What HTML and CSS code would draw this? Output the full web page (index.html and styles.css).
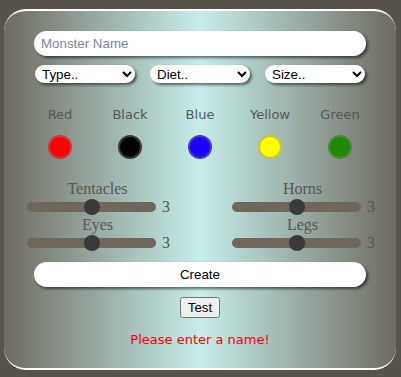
FILE: index.html
```html
<!DOCTYPE html>
<html>

<head>
  <meta charset="utf-8">
  <meta name="viewport" content="width=device-width">
  <title>Monster Maker</title>

  <link rel="stylesheet" href="styles.css">
</head>

<body>
  <div class="card">

    <input class="name" type="text" placeholder="Monster Name">

    <div class="selects">
      <select class="select">
        <option>Type..</option>
      </select>
      <select class="select">
        <option>Diet..</option>
      </select>
      <select class="select">
        <option>Size..</option>
      </select>
    </div>

    <div class="colors">
      <div class="color">
        <span class="color__name">Red</span>
        <span class="color__dot color__dot--red"></span>
      </div>
      <div class="color">
        <span class="color__name">Black</span>
        <span class="color__dot color__dot--black"></span>
      </div>
      <div class="color">
        <span class="color__name">Blue</span>
        <span class="color__dot color__dot--blue"></span>
      </div>
      <div class="color">
        <span class="color__name">Yellow</span>
        <span class="color__dot color__dot--yellow"></span>
      </div>
      <div class="color">
        <span class="color__name">Green</span>
        <span class="color__dot color__dot--green"></span>
      </div>
    </div>

    <div class="sliders">
      <div class="slider">
        <span class="slider__label">Tentacles</span>
        <div class="slider__row">
          <input class="range" type="range" min="1" max="5" value="3">
          <span class="slider__value">3</span>
        </div>
      </div>
      <div class="slider">
        <span class="slider__label">Horns</span>
        <div class="slider__row">
          <input class="range" type="range" min="1" max="5" value="3">
          <span class="slider__value">3</span>
        </div>
      </div>
      <div class="slider">
        <span class="slider__label">Eyes</span>
        <div class="slider__row">
          <input class="range" type="range" min="1" max="5" value="3">
          <span class="slider__value">3</span>
        </div>
      </div>
      <div class="slider">
        <span class="slider__label">Legs</span>
        <div class="slider__row">
          <input class="range" type="range" min="1" max="5" value="3">
          <span class="slider__value">3</span>
        </div>
      </div>
    </div>

    <button class="create" type="button">Create</button>

    <button class="test" type="button">Test</button>

    <p class="message">Please enter a name!</p>

  </div>
</body>

</html>
```

FILE: styles.css
```css
:root {
  --color-page: #57534b;
  --color-edge: #6f6b61;
  --color-glow: #c6eeea;
  --color-label: #575757;
  --shadow-pill: 2px 2px 3px rgba(0, 0, 0, 0.55);
}

body {
  margin: 0;
  padding: 9px 5px 0 4px;
  background-color: var(--color-page);
  font-family: 'Liberation Sans', Arial, sans-serif;
}

.card {
  display: flex;
  flex-direction: column;
  align-items: center;
  height: 361px;
  box-sizing: border-box;
  padding: 20px 21px 0;
  border-top: 2px solid #fff;
  border-bottom: 2px solid #fff;
  border-radius: 22px;
  background: linear-gradient(to right, var(--color-edge), var(--color-glow) 50%, var(--color-edge));
}

.name {
  box-sizing: border-box;
  width: 332px;
  height: 25px;
  padding: 0 7px;
  border: none;
  border-radius: 13px;
  background-color: #fff;
  box-shadow: var(--shadow-pill);
  font: 13.33px 'Liberation Sans', Arial, sans-serif;
}

.name::placeholder {
  color: #7d879a;
}

.selects {
  display: flex;
  justify-content: space-between;
  width: 330px;
  margin-top: 9px;
}

.select {
  width: 100px;
  height: 18px;
  padding: 0 2px 0 3px;
  border: none;
  border-radius: 9px;
  background-color: #fff;
  box-shadow: var(--shadow-pill);
  font: 13.33px 'Liberation Sans', Arial, sans-serif;
  color: #000;
}

.colors {
  display: grid;
  grid-template-columns: repeat(5, 70px);
  margin-top: 24px;
}

.color {
  display: flex;
  flex-direction: column;
  align-items: center;
  gap: 12px;
}

.color__name {
  font-family: 'DejaVu Sans', Verdana, sans-serif;
  font-size: 13px;
  line-height: 16px;
  color: var(--color-label);
}

.color__dot {
  width: 20px;
  height: 20px;
  border: 2px solid rgba(128, 128, 128, 0.45);
  border-radius: 50%;
}

.color__dot--red {
  background-color: #ff0000;
}

.color__dot--black {
  background-color: #000;
}

.color__dot--blue {
  background-color: #1a00ff;
}

.color__dot--yellow {
  background-color: #ffff00;
}

.color__dot--green {
  background-color: #1f8a00;
}

.sliders {
  display: grid;
  grid-template-columns: auto auto;
  justify-content: space-between;
  width: 350px;
  margin-top: 21px;
}

.slider {
  display: flex;
  flex-direction: column;
  align-items: center;
}

.slider__label {
  font-family: 'Liberation Serif', 'Times New Roman', serif;
  font-size: 16px;
  line-height: 17px;
  color: var(--color-label);
}

.slider__row {
  display: flex;
  align-items: center;
  gap: 4px;
  height: 19px;
}

.slider__value {
  font-family: 'Liberation Serif', 'Times New Roman', serif;
  font-size: 16px;
  color: var(--color-label);
}

.range {
  -webkit-appearance: none;
  appearance: none;
  width: 129px;
  height: 10px;
  margin: 2px;
  border-radius: 5px;
  background-color: #6f665c;
  outline: none;
}

.range::-webkit-slider-thumb {
  -webkit-appearance: none;
  appearance: none;
  width: 16px;
  height: 16px;
  border-radius: 50%;
  background-color: #3b3a3a;
}

.create {
  box-sizing: border-box;
  width: 332px;
  height: 25px;
  margin-top: 10px;
  border: none;
  border-radius: 13px;
  background-color: #fff;
  box-shadow: var(--shadow-pill);
  font: 13.33px 'Liberation Sans', Arial, sans-serif;
  color: #000;
}

.test {
  margin-top: 10px;
  height: 21px;
  padding: 1px 6px;
  font: 13.33px 'Liberation Sans', Arial, sans-serif;
}

.message {
  margin: 14px 0 0;
  font-family: 'DejaVu Sans', Verdana, sans-serif;
  font-size: 13px;
  line-height: 16px;
  color: #ff0000;
}
```
